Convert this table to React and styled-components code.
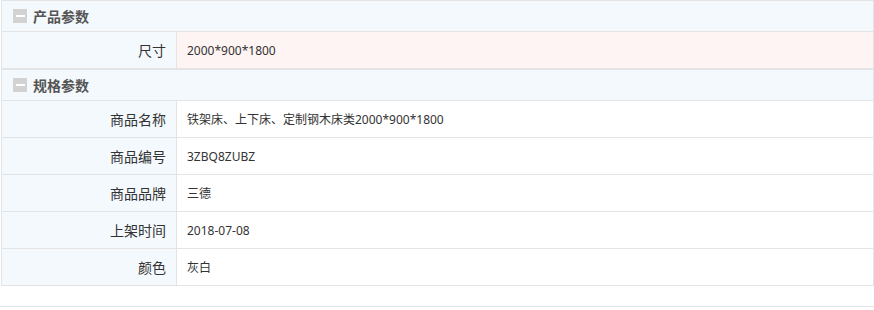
import React from "react";
import styled, { createGlobalStyle } from "styled-components";

const GlobalStyle = createGlobalStyle`
  body {
    margin: 0;
    background: #fff;
    font-family: "Noto Sans CJK SC", "Noto Sans", sans-serif;
    font-size: 12px;
    color: #333;
  }
`;

const Page = styled.div`
  width: 874px;
  height: 310px;
  display: flex;
  flex-direction: column;
`;

const Section = styled.div`
  margin-left: 1px;
  width: 873px;
  box-sizing: border-box;
  border: 1px solid #e4e4e4;
  display: flex;
  flex-direction: column;
`;

const Header = styled.div`
  height: 30px;
  display: flex;
  align-items: center;
  gap: 6px;
  padding-left: 11px;
  background: #f4f9fd;
  font-size: 14px;
  font-weight: bold;
  color: #555;
`;

const Toggle = styled.span`
  width: 14px;
  height: 14px;
  background: #d2d2d2;
  display: flex;
  align-items: center;
  justify-content: center;

  &::before {
    content: "";
    width: 9px;
    height: 2px;
    background: #fff;
  }
`;

const Row = styled.div`
  height: 36px;
  display: flex;
  border-top: 1px solid #e4e4e4;
`;

const Label = styled.div`
  width: 175px;
  flex-shrink: 0;
  box-sizing: border-box;
  padding-right: 10px;
  display: flex;
  align-items: center;
  justify-content: flex-end;
  background: #f4f9fd;
  border-right: 1px solid #e4e4e4;
  font-size: 14px;
  color: #333;
`;

const Value = styled.div`
  flex: 1;
  padding-left: 10px;
  display: flex;
  align-items: center;
  background: ${(p) => (p.$highlight ? "#fff4f4" : "#fff")};
  font-family: "Noto Sans", "Noto Sans CJK SC", sans-serif;
  font-size: 12px;
  color: #333;
`;

const Divider = styled.div`
  margin-top: 20px;
  height: 1px;
  background: #e4e4e4;
`;

const sections = [
  {
    title: "产品参数",
    highlight: true,
    rows: [["尺寸", "2000*900*1800"]],
  },
  {
    title: "规格参数",
    rows: [
      ["商品名称", "铁架床、上下床、定制钢木床类2000*900*1800"],
      ["商品编号", "3ZBQ8ZUBZ"],
      ["商品品牌", "三德"],
      ["上架时间", "2018-07-08"],
      ["颜色", "灰白"],
    ],
  },
];

const App = () => {
  return (
    <Page>
      <GlobalStyle />
      {sections.map((s) => (
        <Section key={s.title}>
          <Header>
            <Toggle />
            {s.title}
          </Header>
          {s.rows.map(([k, v]) => (
            <Row key={k}>
              <Label>{k}</Label>
              <Value $highlight={s.highlight}>{v}</Value>
            </Row>
          ))}
        </Section>
      ))}
      <Divider />
    </Page>
  );
};

export default App;
